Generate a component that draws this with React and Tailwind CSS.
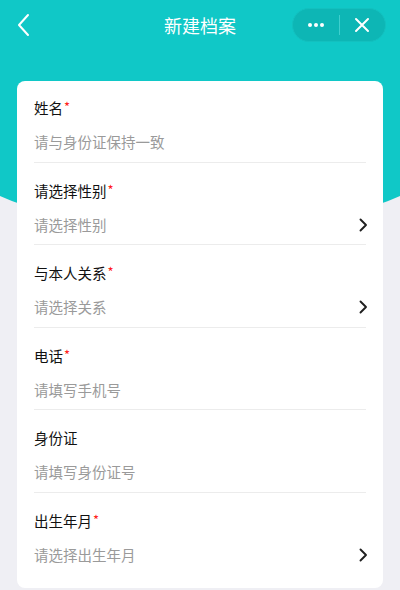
import React from "react";

const rows = [
  { label: "姓名", required: true, placeholder: "请与身份证保持一致", arrow: false },
  { label: "请选择性别", required: true, placeholder: "请选择性别", arrow: true },
  { label: "与本人关系", required: true, placeholder: "请选择关系", arrow: true },
  { label: "电话", required: true, placeholder: "请填写手机号", arrow: false },
  { label: "身份证", required: false, placeholder: "请填写身份证号", arrow: false },
  { label: "出生年月", required: true, placeholder: "请选择出生年月", arrow: true },
];

function Chevron() {
  return (
    <svg width="10" height="16" viewBox="0 0 10 16" fill="none">
      <path d="M2.5 2.5 L8 8 L2.5 13.5" stroke="#1f1f1f" strokeWidth="1.9" strokeLinecap="round" strokeLinejoin="round" />
    </svg>
  );
}

export default function App() {
  return (
    <div
      className="relative w-[400px] h-[590px] overflow-hidden bg-[#efeff4]"
      style={{ fontFamily: '"Noto Sans CJK SC", "Noto Sans", sans-serif' }}
    >
      <div className="absolute top-0 left-[-50px] w-[500px] h-[230px] bg-[#10c8c7] rounded-bl-[250px_85px] rounded-br-[250px_85px]" />

      <div className="relative">
        <div className="h-[50px] flex items-center relative">
          <div className="absolute left-[16px] top-[13px]">
            <svg width="16" height="24" viewBox="0 0 16 24" fill="none">
              <path d="M12 2 L3 12 L12 22" stroke="#ffffff" strokeWidth="2" strokeLinecap="round" strokeLinejoin="round" />
            </svg>
          </div>
          <div className="w-full text-center text-white text-[18px] leading-[24px] mt-[-1px]">新建档案</div>
          <div className="absolute left-[292px] top-[8px] w-[94px] h-[34px] rounded-full bg-[#0db6b5] border border-[#13c0bf] flex items-center">
            <div className="flex-1 flex items-center justify-center gap-[2px]">
              <span className="w-[4px] h-[4px] rounded-full bg-white" />
              <span className="w-[4px] h-[4px] rounded-full bg-white" />
              <span className="w-[4px] h-[4px] rounded-full bg-white" />
            </div>
            <div className="w-px h-[20px] bg-[#3fcfce]" />
            <div className="flex-1 flex items-center justify-center">
              <svg width="16" height="16" viewBox="0 0 16 16" fill="none">
                <path d="M2 2 L14 14 M14 2 L2 14" stroke="#ffffff" strokeWidth="2" strokeLinecap="round" />
              </svg>
            </div>
          </div>
        </div>

        <div className="mx-[17px] mt-[31px] bg-white rounded-[8px] px-[17px] pb-[14px]">
          {rows.map((r, i) => (
            <div
              key={i}
              className={`${i === 0 ? "pt-[17px]" : "pt-[18px]"} pb-[9.5px] ${i === rows.length - 1 ? "" : "border-b border-[#ececec]"}`}
            >
              <div className="h-[20px] flex items-center text-[14.5px] text-[#111111] leading-[20px]">
                <span>{r.label}</span>
                {r.required && <span className="text-[#ff1a1a] text-[13px] self-start leading-[14px] ml-[1px] mt-[2px]">*</span>}
              </div>
              <div className="mt-[14px] h-[20px] flex items-center justify-between text-[14.5px] text-[#9a9a9a] leading-[20px]">
                <span>{r.placeholder}</span>
                {r.arrow && <span className="mr-[-2px] flex items-center"><Chevron /></span>}
              </div>
            </div>
          ))}
        </div>
      </div>
    </div>
  );
}
